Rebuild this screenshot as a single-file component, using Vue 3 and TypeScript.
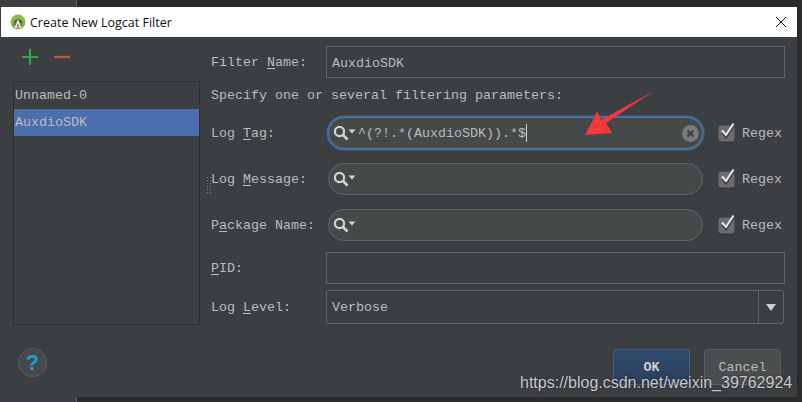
<script setup lang="ts">
const searchRows = [
  { before: 'Log ', key: 'T', after: 'ag:', value: '^(?!.*(AuxdioSDK)).*$', focused: true, top: 'top-tag' },
  { before: 'Log ', key: 'M', after: 'essage:', value: '', focused: false, top: 'top-msg' },
  { before: 'P', key: 'a', after: 'ckage Name:', value: '', focused: false, top: 'top-pkg' },
]
</script>

<template>
  <div class="screen">
    <div class="window">
      <div class="titlebar">
        <svg class="app-icon" width="16" height="16" viewBox="0 0 16 16">
          <circle cx="8" cy="8" r="7.5" fill="#8fb84e" />
          <path d="M3.5 9.5 A4.5 4.5 0 0 1 12.5 9.5 Z" fill="#4d6b3a" />
          <path d="M3.5 9.5 H12.5 V12 H3.5 Z" fill="#6d7a63" />
          <path d="M4.5 14 L8 5 L11.5 14 L9.8 14 L8 9 L6.2 14 Z" fill="#eeeeee" />
        </svg>
        <span class="title">Create New Logcat Filter</span>
        <svg class="close" width="12" height="12" viewBox="0 0 12 12">
          <path d="M1 1 L11 11 M11 1 L1 11" stroke="#111" stroke-width="1" fill="none" />
        </svg>
      </div>

      <div class="content">
        <div class="columns">
          <div class="side">
            <div class="tools">
              <svg width="16" height="16" viewBox="0 0 16 16">
                <path d="M8 0 V16 M0 8 H16" stroke="#2ea84a" stroke-width="2" fill="none" />
              </svg>
              <svg width="16" height="16" viewBox="0 0 16 16">
                <path d="M0 8 H16" stroke="#c2524a" stroke-width="2.4" fill="none" />
              </svg>
            </div>
            <div class="list">
              <div class="item">Unnamed-0</div>
              <div class="item selected">AuxdioSDK</div>
            </div>
          </div>

          <div class="grip"></div>

          <div class="form">
            <div class="row">
              <label class="label">Filter <u>N</u>ame:</label>
              <div class="input wide name-input">AuxdioSDK</div>
            </div>
            <div class="hint">Specify one or several filtering parameters:</div>

            <div v-for="r in searchRows" :key="r.key" class="row" :class="r.top">
              <label class="label">{{ r.before }}<u>{{ r.key }}</u>{{ r.after }}</label>
              <div class="search" :class="{ focused: r.focused }">
                <svg class="lens" width="23" height="16" viewBox="0 0 23 16">
                  <circle cx="6.5" cy="6.5" r="4.6" stroke="#d4d4d4" stroke-width="2.2" fill="none" />
                  <path d="M10 10 L14.5 14.5" stroke="#d4d4d4" stroke-width="2.6" fill="none" />
                  <path d="M15.5 4.5 H22.5 L19 8.5 Z" fill="#d4d4d4" />
                </svg>
                <span class="search-text" v-if="r.value">{{ r.value }}</span>
                <span class="caret" v-if="r.focused"></span>
                <svg v-if="r.focused" class="clear" width="17" height="17" viewBox="0 0 17 17">
                  <circle cx="8.5" cy="8.5" r="8.5" fill="#7a7a7a" />
                  <path d="M5.5 5.5 L11.5 11.5 M11.5 5.5 L5.5 11.5" stroke="#3c3f41" stroke-width="2" fill="none" />
                </svg>
              </div>
              <div class="regex">
                <span class="check">
                  <svg width="18" height="20" viewBox="0 0 18 20">
                    <path d="M4.5 11.5 L8 16 L15 5" stroke="#2e3031" stroke-width="2.4" fill="none" />
                    <path d="M4 9.5 L8 14 L15.5 2.5" stroke="#e6e6e6" stroke-width="2.2" fill="none" />
                  </svg>
                </span>
                <span>Regex</span>
              </div>
            </div>

            <div class="row top-pid">
              <label class="label"><u>P</u>ID:</label>
              <div class="input wide"></div>
            </div>
            <div class="row top-level">
              <label class="label">Log <u>L</u>evel:</label>
              <div class="combo">
                <span class="combo-value">Verbose</span>
                <span class="combo-arrow"><i></i></span>
              </div>
            </div>
          </div>
        </div>

        <div class="footer">
          <div class="help">?</div>
          <div class="buttons">
            <button class="btn primary">OK</button>
            <button class="btn">Cancel</button>
          </div>
        </div>
      </div>
    </div>

    <svg class="arrow" width="80" height="54" viewBox="0 0 80 54">
      <polygon points="69,0 21,32 27,42 0,44 8,29 12,20 16,29" fill="#f5383d" />
    </svg>
    <div class="watermark">https://blog.csdn.net/weixin_39762924</div>
  </div>
</template>

<style scoped>
.screen {
  position: relative;
  width: 802px;
  height: 402px;
  box-sizing: border-box;
  padding: 7px 5px 5px 1px;
  background: linear-gradient(to right, #3c3f41 0 76px, #606366 76px 77px, #2b2b2b 77px);
  overflow: hidden;
  font-family: "Liberation Mono", monospace;
  font-size: 13.33px;
  color: #bbbbbb;
}

.window {
  height: 390px;
  display: flex;
  flex-direction: column;
  background: #3c3f41;
}

.titlebar {
  height: 30px;
  flex: none;
  display: flex;
  align-items: center;
  padding: 0 10px 0 9px;
  background: #fff;
}

.app-icon {
  margin-right: 4px;
}

.title {
  flex: 1;
  font-family: "Open Sans", sans-serif;
  font-size: 12.5px;
  color: #111;
}

.content {
  flex: 1;
  display: flex;
  flex-direction: column;
  padding: 0 12px;
}

.columns {
  display: flex;
  height: 288px;
  flex: none;
}

.side {
  width: 187px;
  flex: none;
  display: flex;
  flex-direction: column;
}

.tools {
  height: 44px;
  flex: none;
  display: flex;
  align-items: center;
  gap: 16px;
  padding-left: 9px;
  box-sizing: border-box;
  padding-bottom: 4px;
}

.list {
  flex: 1;
  background: #3c3f41;
  border: 1px solid #2e3031;
}

.item {
  height: 27px;
  line-height: 27px;
  padding-left: 1px;
}

.selected {
  background: #4b6eaf;
}

.grip {
  width: 11px;
  flex: none;
  background-image: radial-gradient(#77797a 0.6px, transparent 0.8px);
  background-size: 3px 3px;
  background-position: 6px 139px;
  background-clip: content-box;
  box-sizing: border-box;
  height: 157px;
  padding-top: 139px;
  padding-left: 5px;
}

.form {
  flex: 1;
  padding-top: 9px;
  display: flex;
  flex-direction: column;
}

.row {
  display: flex;
  align-items: center;
  height: 32px;
  flex: none;
}

.label {
  width: 115px;
  flex: none;
}

u {
  text-underline-offset: 2px;
}

.hint {
  height: 39px;
  flex: none;
  line-height: 36px;
}

.input {
  height: 32px;
  box-sizing: border-box;
  line-height: 32px;
  padding-left: 5px;
  border: 1px solid #646464;
}

.name-input {
  line-height: 34px;
}

.wide {
  width: 459px;
  flex: none;
}

.top-msg,
.top-pkg {
  margin-top: 14px;
}

.top-pid {
  margin-top: 11px;
}

.top-level {
  margin-top: 6px;
  height: 34px;
}

.search {
  width: 375px;
  height: 32px;
  box-sizing: border-box;
  flex: none;
  margin-left: 2px;
  display: flex;
  align-items: center;
  padding-left: 4px;
  background: #45494a;
  border: 1px solid #646464;
  border-radius: 16px;
}

.focused {
  border-color: #4a7aa8;
  box-shadow: 0 0 0 1.5px #3f6a96;
}

.lens {
  flex: none;
  margin-right: 2px;
}

.caret {
  width: 1px;
  height: 18px;
  background: #cfcfcf;
}

.clear {
  margin-left: auto;
  margin-right: 3px;
}

.regex {
  display: flex;
  align-items: center;
  margin-left: 15px;
  gap: 7px;
}

.check {
  position: relative;
  width: 17px;
  height: 17px;
  flex: none;
  background: #6a6c6e;
  border: 1px solid #505254;
  border-radius: 3px;
  box-sizing: border-box;
  box-shadow: 0 1px 0 #333536;
}

.check svg {
  position: absolute;
  left: -1px;
  top: -5px;
}

.combo {
  width: 458px;
  flex: none;
  height: 34px;
  box-sizing: border-box;
  display: flex;
  border: 1px solid #646464;
  border-radius: 3px;
}

.combo-value {
  flex: 1;
  padding-left: 5px;
  line-height: 34px;
}

.combo-arrow {
  width: 24px;
  flex: none;
  border-left: 1px solid #646464;
  display: flex;
  align-items: center;
  justify-content: center;
}

.combo-arrow i {
  width: 0;
  height: 0;
  border-left: 5px solid transparent;
  border-right: 5px solid transparent;
  border-top: 7px solid #d0d0d0;
}

.footer {
  display: flex;
  justify-content: space-between;
  margin-top: 23px;
  padding-left: 5px;
}

.help {
  width: 29px;
  height: 29px;
  box-sizing: border-box;
  border: 1px solid #5b5e60;
  border-radius: 50%;
  background: #45494a;
  color: #1d9ce0;
  font-family: "Liberation Sans", sans-serif;
  font-weight: 700;
  font-size: 22px;
  line-height: 27px;
  text-align: center;
}

.buttons {
  display: flex;
  gap: 14px;
  margin-top: 1px;
  margin-right: 4px;
}

.btn {
  width: 77px;
  height: 36px;
  box-sizing: border-box;
  padding: 0;
  font: inherit;
  color: #bbbbbb;
  background: #4a4e4f;
  border: 1px solid #5a5e5f;
  border-radius: 4px;
}

.primary {
  background: linear-gradient(#2f4a6e, #2b3f5c);
  border-color: #3f5d82;
  font-weight: 700;
  color: #d0d0d0;
}

.arrow {
  position: absolute;
  left: 585px;
  top: 91px;
}

.watermark {
  position: absolute;
  left: 520px;
  top: 374px;
  font-family: "Liberation Sans", sans-serif;
  font-size: 16px;
  line-height: 18px;
  color: #c9c9c9;
  text-shadow: 0 0 2px rgba(0, 0, 0, 0.6);
}

.close {
  flex: none;
}
</style>

<style>
html,
body {
  margin: 0;
  background: #2b2b2b;
}
</style>
